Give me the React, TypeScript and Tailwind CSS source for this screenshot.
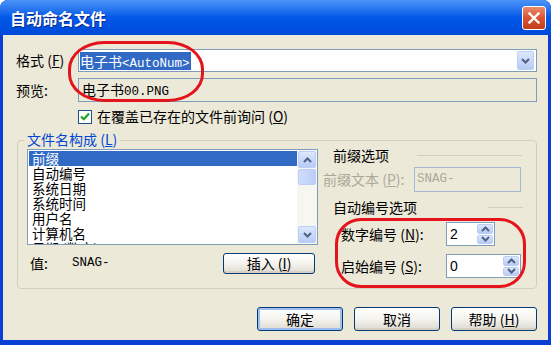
import React from 'react';

const mono = "font-['Liberation_Mono',monospace] text-[12.5px]";

function Chevron({ up = false, color = '#4d6185' }: { up?: boolean; color?: string }) {
  return (
    <svg width="9" height="6" viewBox="0 0 9 6">
      <polyline
        points={up ? '1,5 4.5,1.5 8,5' : '1,1 4.5,4.5 8,1'}
        fill="none"
        stroke={color}
        strokeWidth={2}
      />
    </svg>
  );
}

function ArrowBtn({ up, className = '' }: { up?: boolean; className?: string }) {
  return (
    <div
      className={`flex items-center justify-center rounded-[2px] border border-[#bccdf6] bg-linear-to-b from-[#dde7fd] to-[#b7cbf6] ${className}`}
    >
      <Chevron up={up} />
    </div>
  );
}

function Spinner({ value, width }: { value: string; width: string }) {
  return (
    <div className={`flex h-[24px] ${width} items-stretch border border-[#7f9db9] bg-white`}>
      <span className="flex flex-1 items-center pl-[3px] font-['Liberation_Sans',sans-serif] text-[14px]">{value}</span>
      <div className="flex w-[18px] flex-col gap-[1px] p-[1px]">
        <ArrowBtn up className="flex-1" />
        <ArrowBtn className="flex-1" />
      </div>
    </div>
  );
}

function XpButton({ children, def = false, className = '' }: { children: React.ReactNode; def?: boolean; className?: string }) {
  return (
    <div
      className={`flex items-center justify-center rounded-[3px] border border-[#003c74] bg-linear-to-b from-[#ffffff] via-[#f4f3ee] to-[#dcdad0] text-[14px] ${
        def ? 'shadow-[inset_0_0_0_2px_#9fbdf0]' : 'shadow-[inset_0_-2px_0_#d6d0c5]'
      } ${className}`}
    >
      {children}
    </div>
  );
}

const listItems = ['前缀', '自动编号', '系统日期', '系统时间', '用户名', '计算机名', '日期 (数字)'];

export default function App() {
  return (
    <div className="relative h-[345px] w-[555px] overflow-hidden bg-white font-['Noto_Sans_CJK_SC','Liberation_Sans',sans-serif] text-black">
      {/* 窗口 */}
      <div className="flex h-[345px] w-[551px] flex-col rounded-t-[8px] bg-[#0a3fd6]">
        {/* 标题栏 */}
        <div className="flex h-[35px] items-center rounded-t-[8px] bg-linear-to-b from-[#4a93f7] via-[#0058e8] to-[#004ad9] pl-[10px] pr-[5px]">
          <span className="text-[16px] font-bold text-white [text-shadow:1px_1px_0_#0a2a8a]">自动命名文件</span>
          <div className="ml-auto flex h-[24px] w-[24px] items-center justify-center rounded-[3px] border border-white bg-linear-to-b from-[#e98b6b] via-[#d9532f] to-[#c23d1b]">
            <svg width="12" height="12" viewBox="0 0 12 12">
              <path d="M1.5 1.5 L10.5 10.5 M10.5 1.5 L1.5 10.5" stroke="white" strokeWidth={2.4} strokeLinecap="square" />
            </svg>
          </div>
        </div>

        {/* 客户区 */}
        <div className="mx-[3px] mb-[5px] flex flex-1 flex-col bg-[#ece9d8] pl-[13px] pr-[10px] text-[14px]">
          {/* 格式 */}
          <div className="mt-[14px] flex h-[23px] items-center">
            <span className="w-[62px]">
              格式 (<u>F</u>)
            </span>
            <div className="flex h-[23px] w-[459px] items-center border border-[#7f9db9] bg-white pl-[1px] pr-[2px]">
              <span className="h-[18px] bg-[#316ac5] pr-[1px] leading-[18px] text-white">
                电子书<span className={mono}>&lt;AutoNum&gt;</span>
              </span>
              <ArrowBtn className="ml-auto h-[19px] w-[17px]" />
            </div>
          </div>

          {/* 预览 */}
          <div className="mt-[6px] flex h-[24px] items-center">
            <span className="w-[62px]">预览:</span>
            <div className="flex h-[24px] w-[459px] items-center border border-[#7f9db9] pl-[3px]">
              <span>
                电子书<span className={mono}>00.PNG</span>
              </span>
            </div>
          </div>

          {/* 复选框 */}
          <div className="mt-[7px] flex h-[15px] items-center pl-[62px]">
            <div className="flex h-[14px] w-[14px] items-center justify-center border border-[#1c5180] bg-white">
              <svg width="10" height="9" viewBox="0 0 10 9">
                <polyline points="1,4.5 3.8,7.2 9,1.5" fill="none" stroke="#21a121" strokeWidth={2.2} />
              </svg>
            </div>
            <span className="ml-[5px]">
              在覆盖已存在的文件前询问 (<u>O</u>)
            </span>
          </div>

          {/* 文件名构成 */}
          <div className="relative ml-[1px] mt-[16px] flex h-[149px] w-[520px] rounded-[4px] border border-[#d0d0bf] pl-[9px] pt-[8px]">
            <span className="absolute left-[6px] top-[-11px] bg-[#ece9d8] px-[3px] leading-[18px] text-[#0046d5]">
              文件名构成 (<u>L</u>)
            </span>

            {/* 左侧 */}
            <div className="flex w-[291px] flex-col">
              <div className="flex h-[96px] border border-[#7f9db9] bg-white">
                <div className="flex-1 overflow-hidden pl-[1px] pt-[1px] text-[13.5px]">
                  {listItems.map((item, i) => (
                    <div
                      key={item}
                      className={`h-[15px] pl-[3px] leading-[15px] ${i === 0 ? 'bg-[#316ac5] text-white' : ''}`}
                    >
                      {item}
                    </div>
                  ))}
                </div>
                <div className="flex w-[20px] flex-col bg-[#f7f6f1] p-[1px]">
                  <ArrowBtn up className="h-[17px]" />
                  <div className="mt-[1px] h-[16px] rounded-[2px] border border-[#bccdf6] bg-linear-to-r from-[#cfdcfb] to-[#bccff8]" />
                  <ArrowBtn className="mt-auto h-[17px]" />
                </div>
              </div>
              <div className="mt-[8px] flex h-[21px] items-center">
                <span className="w-[45px] pl-[3px]">值:</span>
                <span className={mono}>SNAG-</span>
                <XpButton className="ml-auto mr-[3px] h-[21px] w-[92px]">
                  插入 (<u>I</u>)
                </XpButton>
              </div>
            </div>

            {/* 右侧 */}
            <div className="ml-[5px] flex w-[213px] flex-col">
              <div className="mt-[-1px] flex h-[14px] items-center">
                <span className="pl-[10px]">前缀选项</span>
                <div className="ml-auto mr-[14px] h-[1px] w-[105px] bg-[#d0d0bf]" />
              </div>
              <div className="mt-[5px] flex h-[25px] items-center">
                <span className="w-[91px] text-[#aca899]">
                  前缀文本 (<u>P</u>):
                </span>
                <div className="flex h-[25px] w-[107px] items-center border border-[#a6b8d6] pl-[2px] text-[#aca899]">
                  <span className={mono}>SNAG-</span>
                </div>
              </div>
              <div className="mt-[8px] flex h-[14px] items-center">
                <span className="pl-[10px]">自动编号选项</span>
                <div className="ml-auto mr-[13px] h-[1px] w-[35px] bg-[#d0d0bf]" />
              </div>
              <div className="mt-[8px] flex h-[24px] items-center pl-[18px]">
                <span className="w-[105px]">
                  数字编号 (<u>N</u>):
                </span>
                <Spinner value="2" width="w-[49px]" />
              </div>
              <div className="mt-[8px] flex h-[24px] items-center pl-[18px]">
                <span className="w-[105px]">
                  启始编号 (<u>S</u>):
                </span>
                <Spinner value="0" width="w-[75px]" />
              </div>
            </div>
          </div>

          {/* 按钮 */}
          <div className="mt-[18px] flex justify-end gap-[11px] pr-[1px]">
            <XpButton def className="h-[24px] w-[86px]">
              确定
            </XpButton>
            <XpButton className="h-[24px] w-[86px]">取消</XpButton>
            <XpButton className="h-[24px] w-[86px]">
              帮助 (<u>H</u>)
            </XpButton>
          </div>
        </div>
      </div>

      {/* 红色标注 */}
      <div className="pointer-events-none absolute left-[68px] top-[41px] h-[61px] w-[136px] rounded-[36px/28px] border-[3px] border-[#e5141c]" />
      <div className="pointer-events-none absolute left-[335px] top-[218px] h-[70px] w-[191px] rounded-[26px] border-[3px] border-[#e5141c]" />
    </div>
  );
}
